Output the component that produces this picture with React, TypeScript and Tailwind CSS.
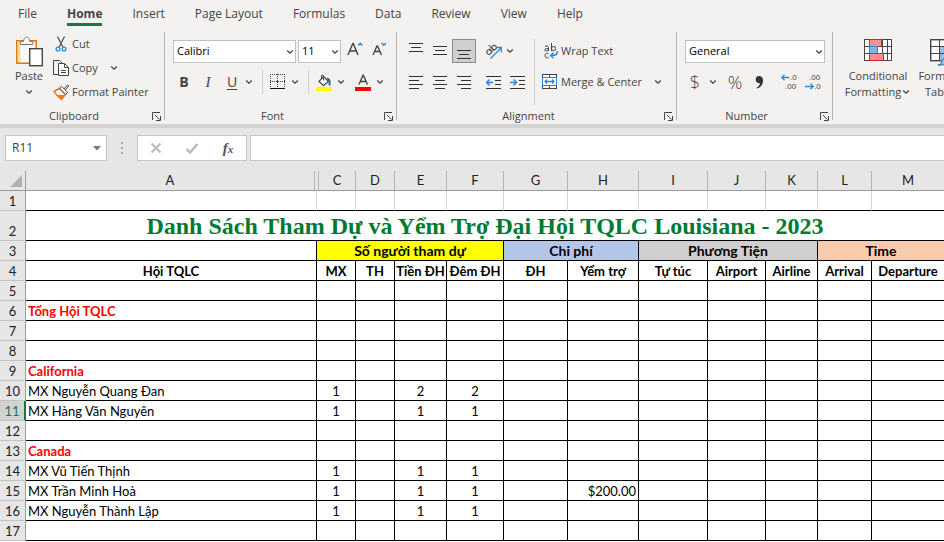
import { useState, type ReactNode } from "react";
import clsx from "clsx";

const TABS = ["File", "Home", "Insert", "Page Layout", "Formulas", "Data", "Review", "View", "Help"];

const COLUMNS = [
  { id: "A", width: "w-[291px]" },
  { id: "C", width: "w-[39px]" },
  { id: "D", width: "w-[39px]" },
  { id: "E", width: "w-[52px]" },
  { id: "F", width: "w-[57px]" },
  { id: "G", width: "w-[64px]" },
  { id: "H", width: "w-[71px]" },
  { id: "I", width: "w-[69px]" },
  { id: "J", width: "w-[58px]" },
  { id: "K", width: "w-[52px]" },
  { id: "L", width: "w-[54px]" },
  { id: "M", width: "" },
];

const GROUPS = [
  { label: "Số người tham dự", span: 4, bg: "bg-[#ffff00]" },
  { label: "Chi phí", span: 2, bg: "bg-[#b4c6e7]" },
  { label: "Phương Tiện", span: 3, bg: "bg-[#d0cece]" },
  { label: "Time", span: 2, bg: "bg-[#f8cbad]" },
];

const HEADINGS = [
  "Hội TQLC", "MX", "TH", "Tiền ĐH", "Đêm ĐH", "ĐH",
  "Yểm trợ", "Tự túc", "Airport", "Airline", "Arrival", "Departure",
];

type Row = { n: number; name?: string; region?: boolean; cells?: Record<string, string> };

const ROWS: Row[] = [
  { n: 5 },
  { n: 6, name: "Tổng Hội TQLC", region: true },
  { n: 7 },
  { n: 8 },
  { n: 9, name: "California", region: true },
  { n: 10, name: "MX Nguyễn Quang Đan", cells: { C: "1", E: "2", F: "2" } },
  { n: 11, name: "MX Hàng Văn Nguyên", cells: { C: "1", E: "1", F: "1" } },
  { n: 12 },
  { n: 13, name: "Canada", region: true },
  { n: 14, name: "MX Vũ Tiến Thịnh", cells: { C: "1", E: "1", F: "1" } },
  { n: 15, name: "MX Trần Minh Hoà", cells: { C: "1", E: "1", F: "1", H: "$200.00" } },
  { n: 16, name: "MX Nguyễn Thành Lập", cells: { C: "1", E: "1", F: "1" } },
  { n: 17 },
];

/* ---------- Icons ---------- */

function Icon({ w = 16, h = 16, children }: { w?: number; h?: number; children: ReactNode }) {
  return (
    <svg width={w} height={h} viewBox={`0 0 ${w} ${h}`} fill="none" stroke="#444" className="shrink-0" aria-hidden="true">
      {children}
    </svg>
  );
}

function Chevron() {
  return (
    <Icon w={10} h={6}>
      <path d="M2.2 1.5 5 4.2 7.8 1.5" strokeWidth="1.3" />
    </Icon>
  );
}

function PasteIcon() {
  return (
    <Icon w={28} h={31}>
      <rect x="1.8" y="4.8" width="19.4" height="22.4" fill="#f8f8f8" stroke="#e07b10" strokeWidth="1.6" />
      <path d="M4 6.5v19" stroke="#fbd79a" strokeWidth="2.6" />
      <path d="M5.5 8.5v-3h3c.3-2.6 1.5-4.5 3.2-4.5s2.9 1.9 3.2 4.5h3v3z" fill="#fff" stroke="#777" />
      <rect x="14.7" y="12.7" width="12.6" height="17" fill="#fff" stroke="#444" strokeWidth="1.4" />
    </Icon>
  );
}

function CutIcon() {
  return (
    <Icon>
      <path d="M4.5.5 9.8 11M11.5.5 6.2 11" stroke="#555" strokeWidth="1.3" />
      <circle cx="5" cy="13" r="1.9" stroke="#2b88d8" strokeWidth="1.3" />
      <circle cx="11" cy="13" r="1.9" stroke="#2b88d8" strokeWidth="1.3" />
    </Icon>
  );
}

function CopyIcon() {
  return (
    <Icon>
      <path d="M5 14.5H.5V.5h6L9 3" />
      <path d="M5.5 3.5h6l4 4v8h-10z" fill="#fff" />
      <path d="M11.5 3.5v4h4M8 10.5h5M8 12.5h5" />
    </Icon>
  );
}

function PainterIcon() {
  return (
    <Icon>
      <path d="M1 7.500 6.500 4.500l6 6L8.500 15.300C6 13.500 3 11 1 7.500z" fill="#fff" stroke="#e8761a" strokeWidth="1.5" />
      <path d="M3.500 11 11.500 11 8.500 15z" fill="#ee7a1c" stroke="none" />
      <path d="m6.500 4 2-1.700 6 6-2 2z" fill="#fff" stroke="#444" />
      <path d="m11 5 3.500-4.200 1.200 1.200L12.300 6" fill="#fff" stroke="#444" />
    </Icon>
  );
}

function GrowFontIcon({ shrink = false }: { shrink?: boolean }) {
  return (
    <Icon>
      {shrink ? (
        <>
          <path d="m2 13 4-9h.5l4 9M3.500 9.500h5.500" strokeWidth="1.3" />
          <path d="m10.500 1 2.300 2.200L15 1" stroke="#2b88d8" strokeWidth="1.4" />
        </>
      ) : (
        <>
          <path d="M1 13 5.800 1.500h.4L11 13M2.800 9h6.400" strokeWidth="1.4" />
          <path d="m11 3.500 2.200-2.200 2.200 2.200" stroke="#2b88d8" strokeWidth="1.4" />
        </>
      )}
    </Icon>
  );
}

function BordersIcon() {
  return (
    <Icon>
      <path d="M0 .5h16M0 7.500h16" strokeDasharray="1 1" />
      <path d="M.5 0v13M7.500 0v13M14.500 0v13" strokeDasharray="1 1" />
      <path d="M6 7.500h3M7.500 6v3" />
      <path d="M0 14.500h15" stroke="#111" />
    </Icon>
  );
}

function FillIcon() {
  return (
    <Icon h={17}>
      <path d="m7.500 2.500 5 5-5 4-4.500-4z" fill="#fff" strokeWidth="1.2" />
      <path d="M7.500 6.500V2c0-1.500-2-1.500-2 0v2.500" />
      <path d="M11 4.500c2.500 0 3 2.500 2.500 7" stroke="#1f66a8" strokeWidth="2" />
      <path d="M0 15h16" stroke="#ffff00" strokeWidth="4" />
    </Icon>
  );
}

function FontColorIcon() {
  return (
    <Icon h={17}>
      <path d="M4 10.500 8 1.200h.4l4 9.300M5.500 7.500h5.500" strokeWidth="1.4" />
      <path d="M0 15h16" stroke="#ff0000" strokeWidth="4" />
    </Icon>
  );
}

/* Horizontal strokes; each entry is [x1, x2, y] */
function Lines({ rows }: { rows: number[][] }) {
  return (
    <Icon>
      {rows.map(([a, b, y]) => (
        <path key={y} d={`M${a} ${y}.5H${b}`} stroke="#333" />
      ))}
    </Icon>
  );
}

function OrientationIcon() {
  return (
    <Icon w={18} h={18}>
      <g transform="rotate(-42 6 7)">
        <circle cx="2.5" cy="8" r="2.2" />
        <path d="M5 5.500v5M7 2.500v8" />
        <circle cx="9.3" cy="8" r="2.2" />
      </g>
      <path d="M5.500 16.500 16 6M11.500 5.500h4.800v5" stroke="#2b88d8" strokeWidth="1.3" />
    </Icon>
  );
}

function IndentIcon({ increase = false }: { increase?: boolean }) {
  return (
    <Icon>
      <path d="M0 2.500h15M9 6.500h6M9 10.500h6M0 14.500h15" stroke="#333" />
      {increase ? (
        <path d="M0 8.500h6M3.500 5.500l3 3-3 3" stroke="#2b88d8" strokeWidth="1.5" />
      ) : (
        <path d="M7 8.500H1M3.500 5.500l-3 3 3 3" stroke="#2b88d8" strokeWidth="1.5" />
      )}
    </Icon>
  );
}

function WrapIcon() {
  return (
    <Icon>
      <path d="M3 3.500c1.500-1 3.500-.5 3.500 1v3.500M6.500 5.500c-2 0-3.800.2-3.800 1.500s2.800 1.300 3.800-.3" />
      <path d="M9.500 0v8" />
      <circle cx="11.6" cy="5.6" r="2.1" />
      <path d="M6.500 10.500c-1.500-.8-3.500-.2-3.500 2s2 2.800 3.500 2" />
      <path d="M15 8c1 3-1 4.500-6 4.500M11.500 9.800 8.700 12.500l2.800 2.700" stroke="#2b88d8" strokeWidth="1.4" />
    </Icon>
  );
}

function MergeIcon() {
  return (
    <Icon>
      <rect x=".5" y=".5" width="14" height="14" fill="#fff" />
      <path d="M7.500.5v14" />
      <rect x=".5" y="3.500" width="14" height="8" fill="#fff" stroke="#2b88d8" />
      <path d="M3 7.500h9M5 5.500l-2 2 2 2M10 5.500l2 2-2 2" stroke="#2b88d8" strokeWidth="1.3" />
    </Icon>
  );
}

function DecimalIcon({ decrease = false }: { decrease?: boolean }) {
  return (
    <svg width="18" height="20" viewBox="0 0 18 20" fill="none" className="shrink-0 font-['Liberation_Sans',sans-serif]" aria-hidden="true">
      <g fill="#444" fontSize="8">
        <text x={decrease ? 4 : 9} y="8">{decrease ? ".00" : ".0"}</text>
        <text x={decrease ? 9 : 4} y="17">{decrease ? ".0" : ".00"}</text>
      </g>
      {decrease ? (
        <path d="M0 14.500h8M5.500 11.800l2.700 2.700-2.700 2.700" stroke="#2b88d8" strokeWidth="1.3" />
      ) : (
        <path d="M8 5.500H.8M3.500 2.800.8 5.500l2.700 2.700" stroke="#2b88d8" strokeWidth="1.3" />
      )}
    </svg>
  );
}

function ConditionalIcon() {
  return (
    <Icon w={28} h={24}>
      <rect x=".5" y="1.500" width="27" height="21" fill="#fff" />
      <path d="M5.500 1.500v21M18.500 1.500v21M23.500 1.500v21M.5 8.500h27M.5 15.500h27" />
      <rect x="5.5" y="1.5" width="12" height="7" fill="#ff8f8f" stroke="#d8262c" />
      <rect x="5.5" y="8.5" width="8" height="7" fill="#7db7e8" stroke="#2b88d8" />
      <rect x="5.5" y="15.5" width="14" height="7" fill="#ff8f8f" stroke="#d8262c" />
    </Icon>
  );
}

function FormatTableIcon() {
  return (
    <Icon w={28} h={28}>
      <rect x=".7" y="1.7" width="26" height="21" fill="#fff" strokeWidth="1.4" />
      <rect x="10" y="8.5" width="16.5" height="14" fill="#8fc1ea" stroke="none" />
      <path d="M9.500 1.500v21M18.500 1.500v21M.5 8.500h26M.5 15.500h26" />
      <path d="M8 27c3 0 3-2 4-4.500s4-2 4.500.5-2.500 4.500-8.500 4z" fill="#8fc1ea" stroke="#2468a8" />
      <path d="m15 21 9-10 2 2-8 10z" fill="#fff" stroke="#444" />
    </Icon>
  );
}

function LauncherIcon() {
  return (
    <Icon w={9} h={9}>
      <path d="M.5 8V.5H8M3 3l4.500 4.500M8.500 4v4.500H4" />
    </Icon>
  );
}

/* ---------- Ribbon pieces ---------- */

function Tool({ label, className, children }: { label: string; className?: string; children: ReactNode }) {
  return (
    <button aria-label={label} className={clsx("flex shrink-0 items-center justify-center", className)}>
      {children}
    </button>
  );
}

function Divider() {
  return <span className="h-6 w-px shrink-0 bg-[#d0d0d0]" />;
}

function Picker({ label, value, options, className }: { label: string; value: string; options: string[]; className: string }) {
  return (
    <div className={clsx("relative shrink-0", className)}>
      <select
        aria-label={label}
        defaultValue={value}
        className="h-[23px] w-full appearance-none border border-[#c0c0c0] bg-white pl-[3px] text-[11px] text-black"
      >
        {options.map((o) => (
          <option key={o}>{o}</option>
        ))}
      </select>
      <span className="pointer-events-none absolute top-[9px] right-px">
        <Chevron />
      </span>
    </div>
  );
}

function Group({ name, className, children }: { name: string; className: string; children: ReactNode }) {
  return (
    <section aria-label={name} className={clsx("flex h-[88px] shrink-0 flex-col border-r border-[#b4b4b4]", className)}>
      <div className="flex h-20">{children}</div>
      <div className="flex h-2 items-center pr-[3px]">
        <span className="flex-1 pr-1 text-center leading-4">{name}</span>
        <button aria-label={`${name} settings`}>
          <LauncherIcon />
        </button>
      </div>
    </section>
  );
}

function Ribbon() {
  return (
    <div className="flex overflow-hidden pb-1 text-[11px] text-[#444]">
      <Group name="Clipboard" className="w-[165px]">
        <button className="ml-[14px] flex w-[30px] flex-col items-center pt-1">
          <PasteIcon />
          <span className="mt-px leading-4">Paste</span>
          <span className="mt-[5px]">
            <Chevron />
          </span>
        </button>
        <div className="ml-[9px] flex flex-col">
          <button className="flex h-6 items-center gap-[3px]">
            <CutIcon /> Cut
          </button>
          <button className="flex h-6 items-center gap-[3px]">
            <CopyIcon /> Copy
            <span className="ml-2">
              <Chevron />
            </span>
          </button>
          <button className="flex h-6 items-center gap-[3px] whitespace-nowrap">
            <PainterIcon /> Format Painter
          </button>
        </div>
      </Group>

      <Group name="Font" className="w-[232px]">
        <div className="flex flex-col gap-[7px] pt-2 pl-[7px]">
          <div className="flex h-[23px] pl-px">
            <Picker label="Font name" value="Calibri" options={["Calibri", "Arial", "Times New Roman"]} className="w-[123px]" />
            <Picker label="Font size" value="11" options={["10", "11", "12", "14"]} className="ml-[2px] w-[43px]" />
            <Tool label="Increase font size" className="ml-[6px] h-5">
              <GrowFontIcon />
            </Tool>
            <Tool label="Decrease font size" className="ml-2 h-5">
              <GrowFontIcon shrink />
            </Tool>
          </div>
          <div className="flex h-6 items-center">
            <button className="w-6 text-sm font-bold">B</button>
            <button className="w-6 font-['Liberation_Serif',serif] text-[15px] italic">I</button>
            <button className="w-6 text-sm underline underline-offset-2">U</button>
            <Tool label="Underline options">
              <Chevron />
            </Tool>
            <div className="mx-2 flex items-center gap-[7px]">
              <Divider />
              <Tool label="Borders" className="gap-1">
                <BordersIcon />
                <Chevron />
              </Tool>
            </div>
            <Divider />
            <Tool label="Fill color" className="ml-[7px] gap-1">
              <FillIcon />
              <Chevron />
            </Tool>
            <Tool label="Font color" className="ml-[9px] gap-1">
              <FontColorIcon />
              <Chevron />
            </Tool>
          </div>
        </div>
      </Group>

      <Group name="Alignment" className="w-[280px]">
        <div className="ml-[7px] flex w-[130px] flex-col gap-[7px] pt-[7px]">
          <div className="flex h-6 items-center">
            <Tool label="Top align" className="w-6">
              <Lines rows={[[1, 15, 0], [3, 13, 4], [1, 15, 8]]} />
            </Tool>
            <Tool label="Middle align" className="w-6">
              <Lines rows={[[1, 15, 3], [3, 13, 7], [1, 15, 11]]} />
            </Tool>
            <Tool label="Bottom align" className="h-6 w-6 border border-[#8a8a8a] bg-[#cfcfcf]">
              <Lines rows={[[1, 15, 7], [3, 13, 11], [1, 15, 15]]} />
            </Tool>
            <span className="ml-[2px]">
              <Divider />
            </span>
            <Tool label="Orientation" className="ml-[7px] gap-[2px]">
              <OrientationIcon />
              <Chevron />
            </Tool>
          </div>
          <div className="flex h-6 items-center">
            <Tool label="Align left" className="w-6">
              <Lines rows={[[1, 15, 2], [1, 11, 6], [1, 15, 10], [1, 11, 14]]} />
            </Tool>
            <Tool label="Center" className="w-6">
              <Lines rows={[[1, 15, 2], [3, 13, 6], [1, 15, 10], [3, 13, 14]]} />
            </Tool>
            <Tool label="Align right" className="w-6">
              <Lines rows={[[1, 15, 2], [5, 15, 6], [1, 15, 10], [5, 15, 14]]} />
            </Tool>
            <span className="ml-[2px]">
              <Divider />
            </span>
            <Tool label="Decrease indent" className="ml-2">
              <IndentIcon />
            </Tool>
            <Tool label="Increase indent" className="ml-2">
              <IndentIcon increase />
            </Tool>
          </div>
        </div>
        <div className="my-[7px] flex flex-col gap-[7px] border-l border-[#d0d0d0] pl-[7px]">
          <button className="flex h-6 items-center gap-[3px]">
            <WrapIcon /> Wrap Text
          </button>
          <button className="flex h-6 items-center gap-[3px] whitespace-nowrap">
            <MergeIcon /> Merge &amp; Center
            <span className="ml-2">
              <Chevron />
            </span>
          </button>
        </div>
      </Group>

      <Group name="Number" className="w-[156px]">
        <div className="flex flex-col gap-[7px] pt-2 pl-2">
          <Picker label="Number format" value="General" options={["General", "Number", "Currency"]} className="w-[140px]" />
          <div className="flex h-6 items-center">
            <button className="w-5 text-lg font-light">$</button>
            <Tool label="Accounting formats" className="ml-[3px]">
              <Chevron />
            </Tool>
            <button className="ml-[7px] w-5 text-lg font-light">%</button>
            <Tool label="Comma style" className="ml-1 w-5">
              <Icon>
                <path d="M8 2c2.500 0 4 1.600 4 4.500 0 4-2.300 7-6 8l-.4-1c2-.8 3.200-2.300 3.400-4.200C6.500 9.500 4.700 8 4.700 5.500 4.700 3.500 6 2 8 2z" fill="#333" stroke="none" />
              </Icon>
            </Tool>
            <span className="ml-[5px]">
              <Divider />
            </span>
            <Tool label="Increase decimal" className="ml-[7px]">
              <DecimalIcon />
            </Tool>
            <Tool label="Decrease decimal" className="ml-[6px]">
              <DecimalIcon decrease />
            </Tool>
          </div>
        </div>
      </Group>

      <div className="flex gap-[5px] pt-[6px] pl-[10px]">
        <button className="flex w-[70px] shrink-0 flex-col items-center leading-4">
          <ConditionalIcon />
          <span className="mt-[6px]">Conditional</span>
          <span className="flex items-center whitespace-nowrap">
            Formatting
            <Chevron />
          </span>
        </button>
        <button className="flex w-[52px] shrink-0 flex-col items-center leading-4">
          <span className="h-6">
            <FormatTableIcon />
          </span>
          <span className="mt-[6px] whitespace-nowrap">Format as</span>
          <span className="flex items-center">
            Table
            <Chevron />
          </span>
        </button>
      </div>
    </div>
  );
}

function FormulaBar() {
  return (
    <div className="flex h-[47px] items-start border-t-4 border-[#d2d2d2] bg-[#e6e6e6] pt-[7px] pl-[5px]">
      <div className="flex h-[26px] w-[102px] shrink-0 items-center border border-[#c6c6c6] bg-white pr-[5px] pl-[6px]">
        <input aria-label="Name box" defaultValue="R11" className="w-full min-w-0 text-xs text-[#444] outline-none" />
        <button aria-label="Defined names">
          <Icon w={8} h={5}>
            <path d="M0 0h8L4 4.500z" fill="#777" stroke="none" />
          </Icon>
        </button>
      </div>
      <div className="flex h-[26px] w-[30px] shrink-0 flex-col items-center justify-center gap-[3px]">
        <span className="size-[2px] bg-[#a6a6a6]" />
        <span className="size-[2px] bg-[#a6a6a6]" />
        <span className="size-[2px] bg-[#a6a6a6]" />
      </div>
      <div className="flex h-[26px] w-[110px] shrink-0 items-center border border-[#c6c6c6] bg-white">
        <Tool label="Cancel" className="w-9">
          <Icon>
            <path d="m3.500 3.500 9 9m0-9-9 9" stroke="#b8b8b8" strokeWidth="1.8" />
          </Icon>
        </Tool>
        <Tool label="Enter" className="w-9">
          <Icon>
            <path d="m2.500 9 3.500 3.500 7.500-8.500" stroke="#b8b8b8" strokeWidth="2.4" />
          </Icon>
        </Tool>
        <button className="w-9 font-['Liberation_Serif',serif] text-[15px] leading-4 font-bold text-[#555] italic">
          f<span className="text-[11px]">x</span>
        </button>
      </div>
      <input
        aria-label="Formula"
        className="ml-[3px] h-[26px] min-w-0 flex-1 border border-r-0 border-[#c6c6c6] bg-white px-2 text-xs outline-none"
      />
    </div>
  );
}

/* ---------- Sheet ---------- */

function RowHeader({ n, active = false }: { n: number; active?: boolean }) {
  return (
    <th
      scope="row"
      className={clsx(
        "border-b border-b-[#c3c3c3] p-0 text-center font-normal",
        n === 2 && "pb-px align-bottom",
        active ? "border-r-2 border-r-[#217346] bg-[#d2d2d2] text-[#217346]" : "border-r border-r-[#9b9b9b] bg-[#e6e6e6] text-[#222]"
      )}
    >
      {n}
    </th>
  );
}

function Sheet({ activeRow }: { activeRow: number }) {
  return (
    <table className="w-full table-fixed border-separate border-spacing-0 bg-white font-['Lato',sans-serif] text-[13px] leading-4 text-black">
      <colgroup>
        <col className="w-[26px]" />
        {COLUMNS.map((c) => (
          <col key={c.id} className={c.width} />
        ))}
      </colgroup>
      <thead>
        <tr className="h-5 bg-[#e6e6e6] text-[#222]">
          <th className="border-r border-b border-[#9b9b9b] p-0">
            <span className="flex justify-end pr-[3px]">
              <Icon w={12} h={12}>
                <path d="M12 0v12H0z" fill="#b2b2b2" stroke="none" />
              </Icon>
            </span>
          </th>
          {COLUMNS.map((c) => (
            <th
              key={c.id}
              scope="col"
              className={clsx(
                "border-b border-b-[#9b9b9b] p-0 font-normal",
                c.id === "A" && "pr-[2px]",
                c.id === "C" && "pl-px"
              )}
            >
              {/* column B is hidden, so A and C keep a small gap between their edges */}
              <span
                className={clsx(
                  "block h-[19px] leading-[19px]",
                  c.id !== "M" && "border-r border-[#b4b4b4]",
                  c.id === "C" && "border-l"
                )}
              >
                {c.id}
              </span>
            </th>
          ))}
        </tr>
      </thead>
      <tbody>
        <tr className="h-5">
          <RowHeader n={1} />
          {COLUMNS.map((c) => (
            <td key={c.id} className={clsx("border-b border-b-black p-0", c.id !== "M" && "border-r border-r-[#d4d4d4]")} />
          ))}
        </tr>
        <tr className="h-[30px]">
          <RowHeader n={2} />
          <td
            colSpan={12}
            className="border-b border-black p-0 pt-px text-center font-['Liberation_Serif',serif] text-2xl leading-7 font-bold whitespace-nowrap text-[#007a33]"
          >
            Danh Sách Tham Dự và Yểm Trợ Đại Hội TQLC Louisiana - 2023
          </td>
        </tr>
        <tr className="h-5 text-center text-sm leading-4 font-bold">
          <th scope="row" className="border-r border-b border-r-[#9b9b9b] border-b-[#c3c3c3] bg-[#e6e6e6] p-0 text-[13px] font-normal text-[#222]">
            3
          </th>
          <td className="border-r border-b border-black p-0" />
          {GROUPS.map((g) => (
            <td key={g.label} colSpan={g.span} className={clsx("border-r border-b border-black p-0 last:border-r-0", g.bg)}>
              {g.label}
            </td>
          ))}
        </tr>
        <tr className="h-5 text-center font-bold">
          <RowHeader n={4} />
          {HEADINGS.map((h) => (
            <td key={h} className="border-r border-b border-black p-0 whitespace-nowrap last:border-r-0">
              {h}
            </td>
          ))}
        </tr>
        {ROWS.map((row) => (
          <tr key={row.n} className="h-5">
            <RowHeader n={row.n} active={row.n === activeRow} />
            {COLUMNS.map((c) => (
              <td
                key={c.id}
                className={clsx(
                  "border-r border-b border-black p-0 whitespace-nowrap last:border-r-0",
                  c.id === "A" && "pl-[2px]",
                  c.id === "A" && row.region && "font-bold text-[#ff0000]",
                  c.id === "H" && "pr-[2px] text-right",
                  c.id !== "A" && c.id !== "H" && "text-center"
                )}
              >
                {c.id === "A" ? row.name : row.cells?.[c.id]}
              </td>
            ))}
          </tr>
        ))}
      </tbody>
    </table>
  );
}

export default function App() {
  const [tab, setTab] = useState("Home");

  return (
    <div className="h-screen overflow-hidden bg-white font-['Open_Sans',sans-serif]">
      <header className="bg-[#f3f2f1]">
        <nav className="flex h-8 items-start gap-[30px] pt-1 pl-[18px] text-xs text-[#444]">
          {TABS.map((t) => (
            <button
              key={t}
              onClick={() => setTab(t)}
              className={clsx(
                "h-[22px] border-b-[3px] leading-[19px] whitespace-nowrap",
                t === tab ? "border-[#217346] font-bold" : "border-transparent"
              )}
            >
              {t}
            </button>
          ))}
        </nav>
        <Ribbon />
      </header>
      <FormulaBar />
      <Sheet activeRow={11} />
    </div>
  );
}
